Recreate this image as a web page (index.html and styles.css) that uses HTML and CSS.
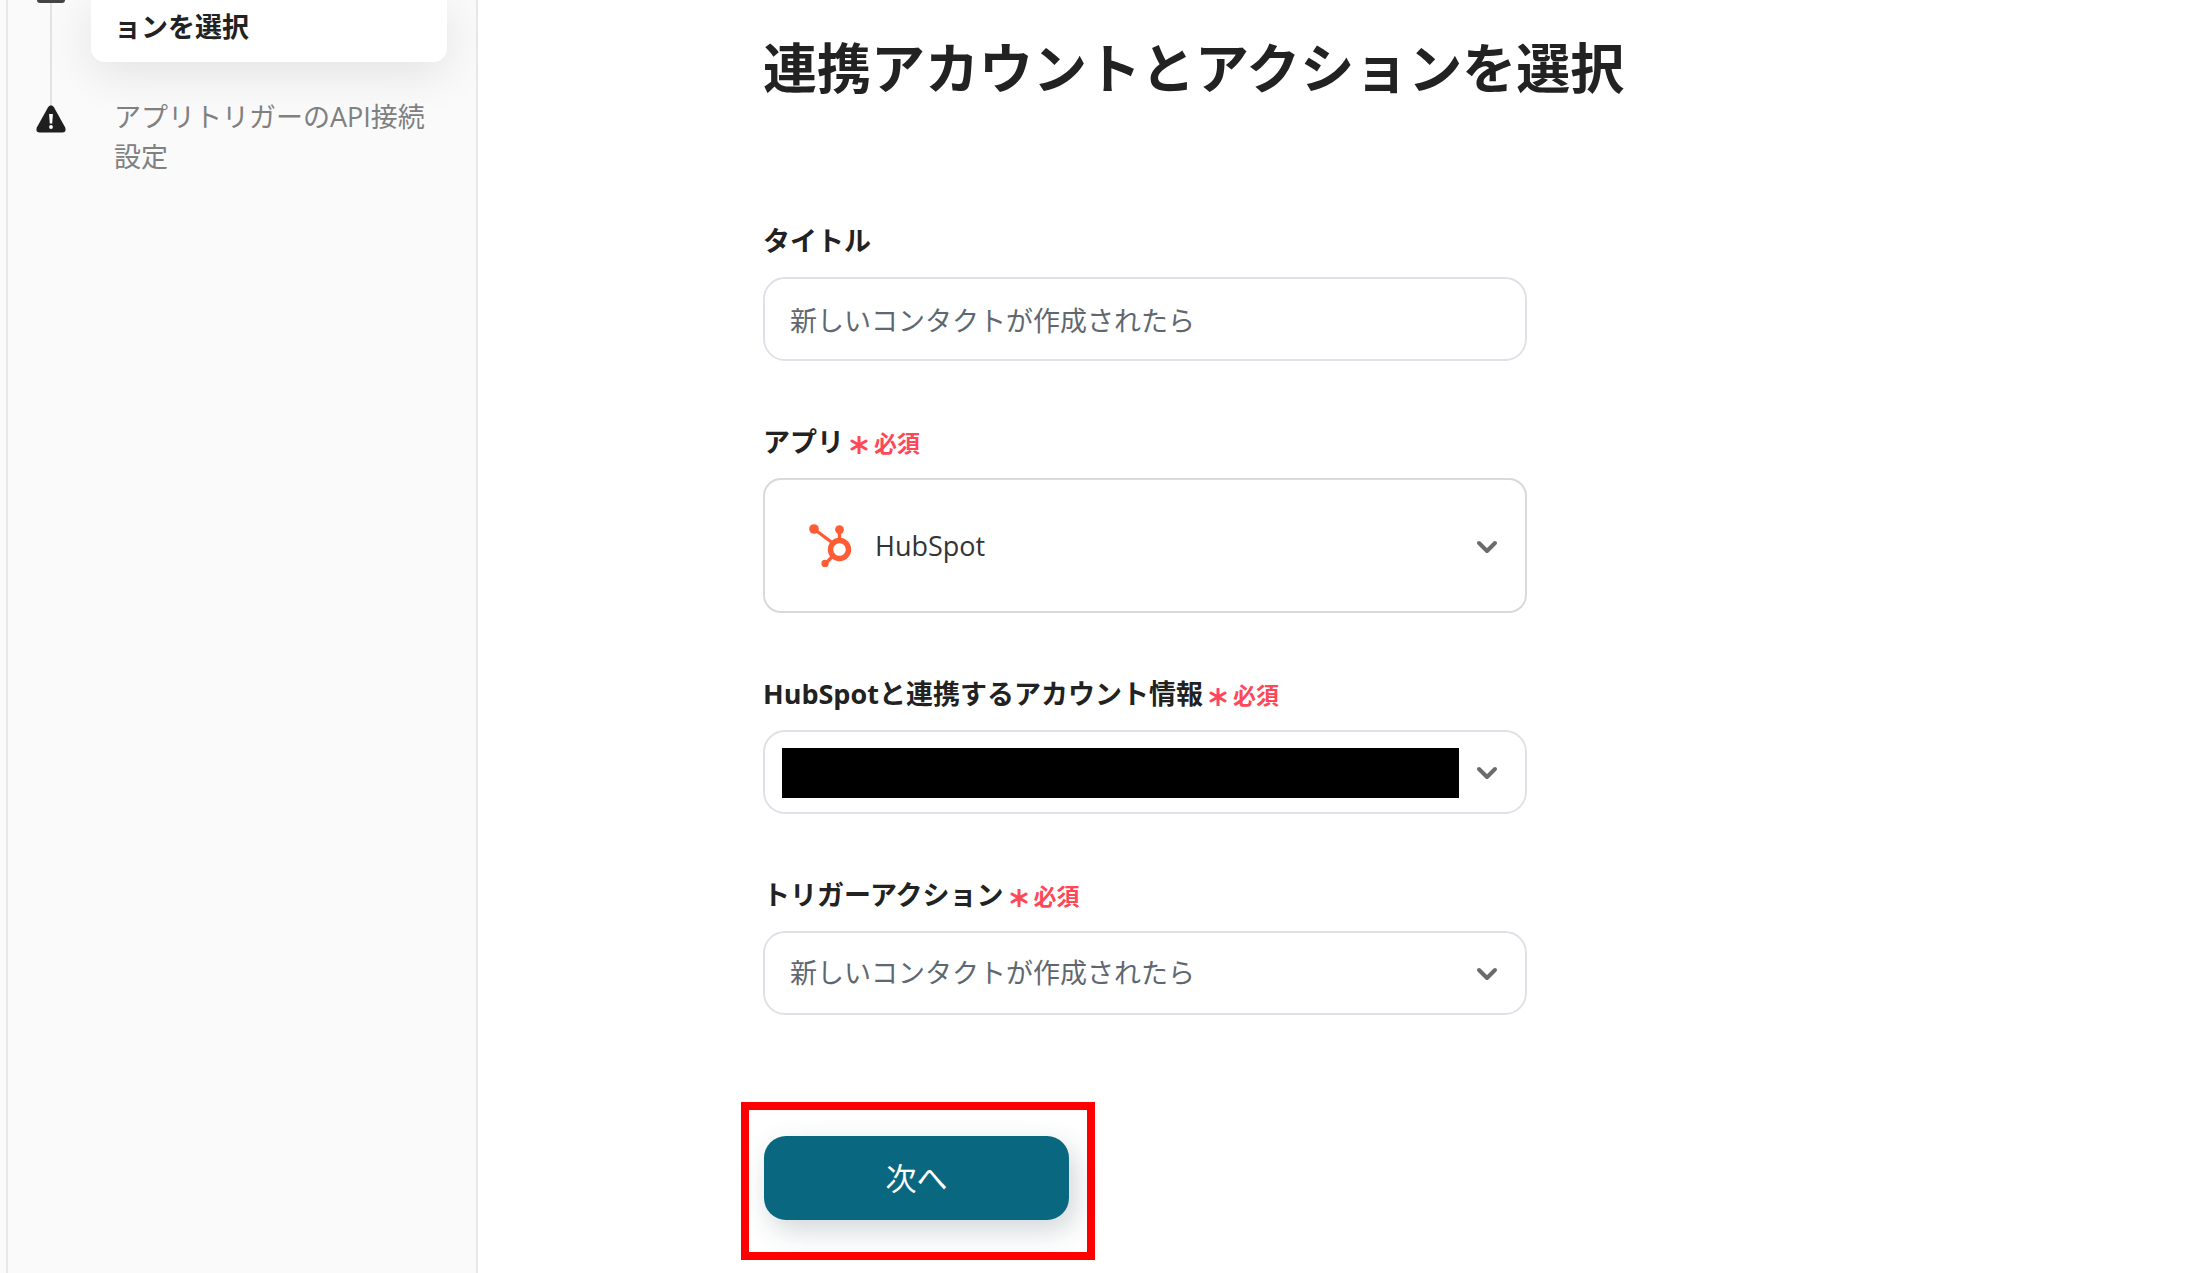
FILE: index.html
```html
<!DOCTYPE html>
<html lang="ja">
<head>
    <meta charset="UTF-8">
    <meta name="viewport" content="width=device-width, initial-scale=1.0">
    <title>連携アカウントとアクションを選択</title>
    <link rel="stylesheet" href="styles.css">
</head>
<body>
    <div class="page">
        <aside class="sidebar">
            <ol class="steps">
                <li class="step">
                    <div class="step-marker">
                        <span class="step-square"></span>
                        <span class="step-line"></span>
                    </div>
                    <div class="step-text active">ョンを選択</div>
                </li>
                <li class="step">
                    <div class="step-marker">
                        <span class="step-line short"></span>
                        <svg class="warning-icon" viewBox="0 0 30 28" aria-hidden="true">
                            <path d="M12.2 2.1Q15-1.6 17.8 2.1L29.2 22.6Q30.6 27.2 26.4 27.4H3.6Q-.6 27.2.8 22.6Z" fill="#1f1f1f"/>
                            <path d="M13.1 9h3.8l-.7 9.6h-2.4z" fill="#fff"/>
                            <circle cx="15" cy="22" r="1.9" fill="#fff"/>
                        </svg>
                    </div>
                    <div class="step-text">アプリトリガーのAPI接続設定</div>
                </li>
            </ol>
        </aside>

        <main class="content">
            <h1>連携アカウントとアクションを選択</h1>

            <form class="form">
                <div class="field">
                    <div class="field-label">
                        <label for="title">タイトル</label>
                    </div>
                    <input class="control" type="text" id="title" value="新しいコンタクトが作成されたら">
                </div>

                <div class="field">
                    <div class="field-label">
                        <label for="app">アプリ</label>
                        <span class="required">
                            <svg class="asterisk" viewBox="0 0 18 18" aria-hidden="true"><path d="M9 1v16M2 5l14 8M16 5L2 13"/></svg>必須
                        </span>
                    </div>
                    <div class="select-box">
                        <select class="control app-select" id="app">
                            <option>HubSpot</option>
                        </select>
                        <svg class="app-icon" viewBox="0 0 44 44" aria-hidden="true">
                            <g stroke="#ff5c35" fill="none">
                                <path d="M6 6L26 21M31.5 7v12M17 41l9-9" stroke-width="3.4"/>
                                <circle cx="31.5" cy="26.5" r="9" stroke-width="5.4"/>
                            </g>
                            <g fill="#ff5c35">
                                <circle cx="6" cy="6" r="4.8"/>
                                <circle cx="31.5" cy="6.6" r="4.4"/>
                                <circle cx="17" cy="40.4" r="3.6"/>
                            </g>
                        </svg>
                        <svg class="chevron" viewBox="0 0 24 16" aria-hidden="true"><path d="M4 4l8 8 8-8"/></svg>
                    </div>
                </div>

                <div class="field">
                    <div class="field-label">
                        <label for="account">HubSpotと連携するアカウント情報</label>
                        <span class="required">
                            <svg class="asterisk" viewBox="0 0 18 18" aria-hidden="true"><path d="M9 1v16M2 5l14 8M16 5L2 13"/></svg>必須
                        </span>
                    </div>
                    <div class="select-box">
                        <select class="control" id="account">
                            <option></option>
                        </select>
                        <span class="mask"></span>
                        <svg class="chevron" viewBox="0 0 24 16" aria-hidden="true"><path d="M4 4l8 8 8-8"/></svg>
                    </div>
                </div>

                <div class="field">
                    <div class="field-label">
                        <label for="action">トリガーアクション</label>
                        <span class="required">
                            <svg class="asterisk" viewBox="0 0 18 18" aria-hidden="true"><path d="M9 1v16M2 5l14 8M16 5L2 13"/></svg>必須
                        </span>
                    </div>
                    <div class="select-box">
                        <select class="control" id="action">
                            <option>新しいコンタクトが作成されたら</option>
                        </select>
                        <svg class="chevron" viewBox="0 0 24 16" aria-hidden="true"><path d="M4 4l8 8 8-8"/></svg>
                    </div>
                </div>

                <div class="highlight">
                    <button class="next-button" type="button">次へ</button>
                </div>
            </form>
        </main>
    </div>
</body>
</html>
```

FILE: styles.css
```css
* {
    box-sizing: border-box;
}

body {
    margin: 0;
    font-family: "Open Sans", "Noto Sans CJK JP", sans-serif;
    font-size: 27px;
    line-height: 40px;
    color: #222;
    background-color: #fff;
}

.page {
    display: flex;
    min-height: 100vh;
    padding-left: 6px;
    background-color: #fafafa;
}

/* sidebar */
.sidebar {
    flex: 0 0 472px;
    border-left: 2px solid #e8e8e8;
    border-right: 2px solid #e8e8e8;
    padding: 0 29px 0 28px;
}

.steps {
    list-style: none;
    margin: 0;
    padding: 0;
}

.step {
    display: flex;
    gap: 25px;
}

.step-marker {
    flex: 0 0 30px;
    display: flex;
    flex-direction: column;
    align-items: center;
}

.step-square {
    width: 28px;
    height: 3px;
    background-color: #444;
    border-radius: 0 0 3px 3px;
}

.step-line {
    flex: 1;
    width: 2px;
    background-color: #e2e2e2;
}

.step-line.short {
    flex: 0 0 43px;
}

.warning-icon {
    width: 30px;
    height: 28px;
}

.step-text {
    flex: 1;
    padding: 35px 12px 0 23px;
    color: #808080;
}

.step-text.active {
    padding: 7px 12px 15px 23px;
    font-weight: bold;
    color: #222;
    background-color: #fff;
    border-radius: 0 0 14px 14px;
    box-shadow: 0 10px 48px rgba(0, 0, 0, 0.1);
}

/* main */
.content {
    flex: 1;
    padding: 28px 285px 0;
    background-color: #fff;
}

h1 {
    margin: 0 0 113px;
    font-size: 54px;
    line-height: 80px;
    white-space: nowrap;
}

.form {
    max-width: 764px;
}

.field {
    margin-bottom: 61px;
}

.field-label {
    display: flex;
    align-items: center;
    gap: 6px;
    margin-bottom: 16px;
    font-weight: bold;
}

.required {
    display: flex;
    align-items: center;
    gap: 6px;
    padding-top: 2px;
    line-height: 38px;
    font-size: 23px;
    color: #ff4757;
}

.asterisk {
    width: 18px;
    height: 18px;
    margin-top: 4px;
    fill: none;
    stroke: #ff4757;
    stroke-width: 3;
    stroke-linecap: round;
}

.control {
    display: block;
    width: 100%;
    height: 84px;
    padding: 0 25px;
    font: inherit;
    color: #5f6870;
    background-color: #fff;
    border: 2px solid #dee2e6;
    border-radius: 22px;
    appearance: none;
}

.select-box {
    position: relative;
}

.app-select {
    height: 135px;
    padding-left: 110px;
    color: #333;
    border-color: #d9d9d9;
    border-radius: 18px;
}

.app-icon {
    position: absolute;
    left: 45px;
    top: 45px;
    width: 44px;
    height: 44px;
}

.chevron {
    position: absolute;
    right: 28px;
    top: 50%;
    width: 24px;
    height: 16px;
    margin-top: -7px;
    fill: none;
    stroke: #6b6b6b;
    stroke-width: 4;
    stroke-linecap: round;
    stroke-linejoin: round;
    pointer-events: none;
}

.mask {
    position: absolute;
    top: 18px;
    bottom: 16px;
    left: 19px;
    right: 68px;
    background-color: #000;
}

.highlight {
    width: fit-content;
    margin: 87px 0 0 -22px;
    padding: 26px 18px 32px 15px;
    border: 8px solid #f00;
}

.next-button {
    display: block;
    width: 305px;
    height: 84px;
    padding: 0 0 3px;
    font-family: inherit;
    font-size: 31px;
    color: #fff;
    background-color: #0a6780;
    border: none;
    border-radius: 22px;
    box-shadow: 6px 10px 28px rgba(20, 50, 60, 0.2);
    cursor: pointer;
}
```
